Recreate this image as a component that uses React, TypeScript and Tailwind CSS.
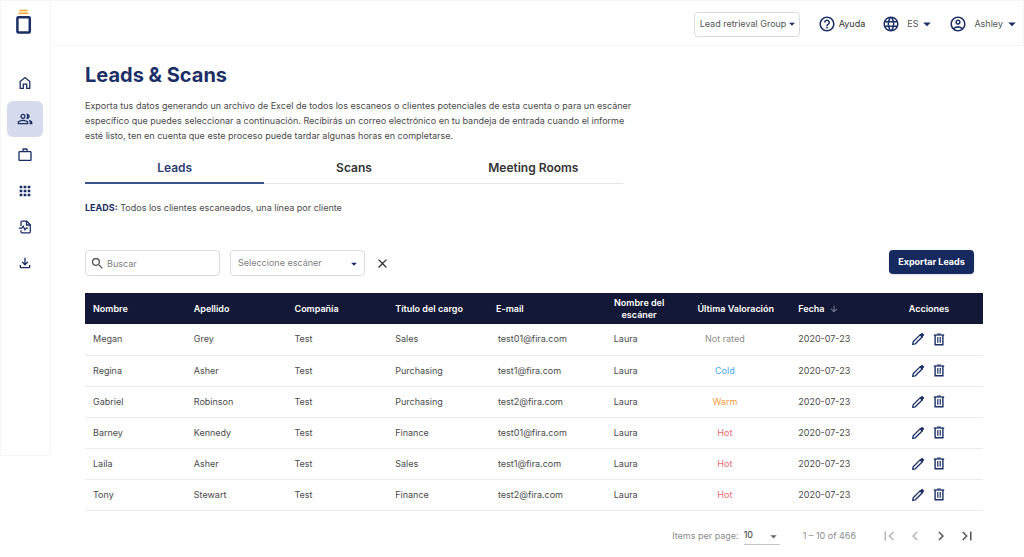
import { useState } from 'react'
import type { ReactNode } from 'react'
import clsx from 'clsx'
import {
  MdApps,
  MdArrowDownward,
  MdArrowDropDown,
  MdChevronLeft,
  MdChevronRight,
  MdClose,
  MdFirstPage,
  MdHelpOutline,
  MdLanguage,
  MdLastPage,
  MdOutlineAccountCircle,
  MdOutlineFileDownload,
  MdOutlinePeopleAlt,
  MdSearch,
  MdWorkOutline,
} from 'react-icons/md'

type Rating = 'Not rated' | 'Cold' | 'Warm' | 'Hot'

interface Lead {
  name: string
  surname: string
  company: string
  role: string
  email: string
  scanner: string
  rating: Rating
  date: string
}

const leads: Lead[] = [
  { name: 'Megan', surname: 'Grey', company: 'Test', role: 'Sales', email: 'test01@fira.com', scanner: 'Laura', rating: 'Not rated', date: '2020-07-23' },
  { name: 'Regina', surname: 'Asher', company: 'Test', role: 'Purchasing', email: 'test1@fira.com', scanner: 'Laura', rating: 'Cold', date: '2020-07-23' },
  { name: 'Gabriel', surname: 'Robinson', company: 'Test', role: 'Purchasing', email: 'test2@fira.com', scanner: 'Laura', rating: 'Warm', date: '2020-07-23' },
  { name: 'Barney', surname: 'Kennedy', company: 'Test', role: 'Finance', email: 'test01@fira.com', scanner: 'Laura', rating: 'Hot', date: '2020-07-23' },
  { name: 'Laila', surname: 'Asher', company: 'Test', role: 'Sales', email: 'test1@fira.com', scanner: 'Laura', rating: 'Hot', date: '2020-07-23' },
  { name: 'Tony', surname: 'Stewart', company: 'Test', role: 'Finance', email: 'test2@fira.com', scanner: 'Laura', rating: 'Hot', date: '2020-07-23' },
]

const ratingColor: Record<Rating, string> = {
  'Not rated': 'text-[#8c8c8c]',
  Cold: 'text-[#3fa9f5]',
  Warm: 'text-[#fb9a3c]',
  Hot: 'text-[#ec6a70]',
}

const tabs = ['Leads', 'Scans', 'Meeting Rooms']

function Logo() {
  return (
    <svg width="16" height="26" viewBox="0 0 16 26" fill="none" aria-hidden="true">
      <path d="M3.5 1.5h8" stroke="#f5ae45" strokeWidth="1.8" />
      <path d="M2.5 4.3h10" stroke="#f5ae45" strokeWidth="1.8" />
      <rect x="1.4" y="8.2" width="12.4" height="15.4" rx="1" stroke="#1b2f66" strokeWidth="2.5" />
    </svg>
  )
}

function HomeIcon() {
  return (
    <svg width="14" height="14" viewBox="0 0 14 14" fill="none" stroke="currentColor" strokeWidth="1.3" aria-hidden="true">
      <path d="M2.2 5.5L7 1.6L11.8 5.5V12.4H8.7V8.2H5.3V12.4H2.2Z" />
    </svg>
  )
}

function FilePulseIcon() {
  return (
    <svg width="14" height="14" viewBox="0 0 14 14" fill="none" stroke="currentColor" strokeWidth="1.3" aria-hidden="true">
      <path d="M3 6V2.2Q3 1.2 4 1.2H8.8L12.3 4.7V11.8Q12.3 12.8 11.3 12.8H4Q3 12.8 3 11.8V10.3" />
      <path d="M8.5 1.2V5H12.3" />
      <path d="M.8 8.2H3.8L5.2 6.2L7 9.8L8.2 8.2H10" />
    </svg>
  )
}

function PencilIcon() {
  return (
    <svg width="14" height="14" viewBox="0 0 14 14" fill="none" stroke="currentColor" strokeWidth="1.3" strokeLinejoin="round" aria-hidden="true">
      <path d="M1.7 12.3L2.2 9.7L9.3 2.6L11.4 4.7L4.3 11.8Z" />
      <path d="M8.8 3.1L10.5 1.5Q11.1 1 11.7 1.5L12.5 2.3Q13 2.9 12.5 3.5L10.9 5.2Z" fill="currentColor" strokeWidth=".8" />
    </svg>
  )
}

function TrashIcon() {
  return (
    <svg width="12" height="13" viewBox="0 0 12 13" fill="none" stroke="currentColor" aria-hidden="true">
      <path d="M.8 2H11.2" strokeWidth="1.3" />
      <path d="M4 1H8" strokeWidth="1" />
      <path d="M2.1 2V11.8H9.9V2" strokeWidth="1.4" />
      <path d="M4.8 4V9.8M7.2 4V9.8" strokeWidth="1.2" />
    </svg>
  )
}

const navItems: { label: string; icon: ReactNode }[] = [
  { label: 'Inicio', icon: <HomeIcon /> },
  { label: 'Leads', icon: <MdOutlinePeopleAlt size={16} /> },
  { label: 'Empresa', icon: <MdWorkOutline size={16} /> },
  { label: 'Aplicaciones', icon: <MdApps size={16} /> },
  { label: 'Informes', icon: <FilePulseIcon /> },
  { label: 'Descargas', icon: <MdOutlineFileDownload size={16} /> },
]

function Sidebar() {
  return (
    <aside className="w-[51px] min-h-[456px] pl-[6px] shrink-0 self-start border border-[#f6f6f7] flex flex-col items-start">
      <a href="#" aria-label="Portada" className="mt-2 ml-[9px]">
        <Logo />
      </a>
      <nav className="mt-[30px] flex flex-col">
        {navItems.map((item, i) => (
          <a
            key={item.label}
            href="#"
            aria-label={item.label}
            className={clsx('w-9 h-9 rounded-md flex items-center justify-center text-[#1b2f66]', i === 1 && 'bg-[#d6daed]')}
          >
            {item.icon}
          </a>
        ))}
      </nav>
    </aside>
  )
}

function TopBar() {
  return (
    <header className="h-[46px] pt-[2px] pr-[2px] border-y border-r border-[#f6f6f7] flex items-center justify-end text-[9px] text-[#555]">
      <div className="relative flex">
        <select aria-label="Grupo" className="appearance-none w-[106px] h-[25px] pl-[5px] rounded border border-[#dcdcdf] bg-white">
          <option>Lead retrieval Group</option>
        </select>
        <MdArrowDropDown size={14} className="absolute right-[1px] top-[5px] pointer-events-none text-[#1b2f66]" />
      </div>
      <a href="#" className="ml-[18px] flex items-center gap-[3px] text-[#333]">
        <MdHelpOutline size={18} className="text-[#1b2f66]" />
        Ayuda
      </a>
      <button className="ml-[17px] flex items-center">
        <MdLanguage size={18} className="text-[#1b2f66]" />
        <span className="ml-[7px]">ES</span>
        <MdArrowDropDown size={18} className="text-[#1b2f66]" />
      </button>
      <button className="ml-[13px] flex items-center">
        <MdOutlineAccountCircle size={18} className="text-[#1b2f66]" />
        <span className="ml-[7px]">Ashley</span>
        <MdArrowDropDown size={18} className="text-[#1b2f66]" />
      </button>
    </header>
  )
}

function LeadsTable() {
  return (
    <table className="w-full table-fixed text-left text-[9px] leading-3 text-[#4a4a4a]">
      <thead>
        <tr className="h-[31px] bg-[#131836] text-white">
          <th className="px-2 font-semibold">Nombre</th>
          <th className="px-2 font-semibold">Apellido</th>
          <th className="px-2 font-semibold">Compañía</th>
          <th className="px-2 font-semibold">Título del cargo</th>
          <th className="px-2 font-semibold">E-mail</th>
          <th className="px-5 font-semibold text-center">Nombre del escáner</th>
          <th className="px-2 font-semibold whitespace-nowrap">Última Valoración</th>
          <th className="px-2 font-semibold">
            <span className="flex items-center gap-1">
              Fecha
              <MdArrowDownward size={10} className="text-[#8d90a3]" />
            </span>
          </th>
          <th className="w-[92px] pr-4 font-semibold text-center">Acciones</th>
        </tr>
      </thead>
      <tbody>
        {leads.map(lead => (
          <tr key={lead.name} className="h-[31px] border-b border-[#ebebed]">
            <td className="px-2">{lead.name}</td>
            <td className="px-2">{lead.surname}</td>
            <td className="px-2">{lead.company}</td>
            <td className="px-2">{lead.role}</td>
            <td className="pl-[10px]">{lead.email}</td>
            <td className="pl-[25px]">{lead.scanner}</td>
            <td className={clsx('pr-[30px] text-center', ratingColor[lead.rating])}>{lead.rating}</td>
            <td className="px-2">{lead.date}</td>
            <td className="pr-[18px]">
              <div className="flex items-center justify-center gap-2 text-[#1b2f66]">
                <button aria-label={`Editar ${lead.name}`}>
                  <PencilIcon />
                </button>
                <button aria-label={`Eliminar ${lead.name}`}>
                  <TrashIcon />
                </button>
              </div>
            </td>
          </tr>
        ))}
      </tbody>
    </table>
  )
}

function Pagination() {
  return (
    <div className="mt-4 pr-[7px] flex items-center justify-end text-[9px] text-[#8c8c8c]">
      <label htmlFor="page-size">Items per page:</label>
      <div className="relative ml-[5px] flex">
        <select id="page-size" defaultValue="10" className="appearance-none w-9 h-[18px] border-b border-[#c4c4c4] bg-white text-[#333]">
          <option>10</option>
          <option>25</option>
          <option>50</option>
        </select>
        <MdArrowDropDown size={15} className="absolute -right-[1px] top-[2px] pointer-events-none text-[#666]" />
      </div>
      <span className="ml-[23px]">1 – 10 of 466</span>
      <div className="ml-6 flex gap-2">
        <button aria-label="Primera página" disabled className="text-[#b5b5b5]"><MdFirstPage size={18} /></button>
        <button aria-label="Página anterior" disabled className="text-[#b5b5b5]"><MdChevronLeft size={18} /></button>
        <button aria-label="Página siguiente" className="text-[#555]"><MdChevronRight size={18} /></button>
        <button aria-label="Última página" className="text-[#555]"><MdLastPage size={18} /></button>
      </div>
    </div>
  )
}

export default function App() {
  const [tab, setTab] = useState('Leads')

  return (
    <div className="min-h-screen bg-white flex font-['Inter',sans-serif]">
      <Sidebar />
      <div className="flex-1 min-w-0">
        <TopBar />
        <main className="pl-[34px] pr-[41px] pt-[17px]">
          <h1 className="text-[20px] leading-6 font-bold text-[#1b2f66]">Leads &amp; Scans</h1>
          <p className="mt-[11px] max-w-[550px] text-[9px] leading-[15px] text-[#4a4a4a]">
            Exporta tus datos generando un archivo de Excel de todos los escaneos o clientes potenciales de esta cuenta o para un escáner
            específico que puedes seleccionar a continuación. Recibirás un correo electrónico en tu bandeja de entrada cuando el informe
            esté listo, ten en cuenta que este proceso puede tardar algunas horas en completarse.
          </p>

          {/* Tabs */}
          <div role="tablist" className="mt-[10px] max-w-[538px] grid grid-cols-3 border-b border-[#e4e4e6]">
            {tabs.map(t => (
              <button
                key={t}
                role="tab"
                aria-selected={t === tab}
                onClick={() => setTab(t)}
                className={clsx(
                  'h-[31px] -mb-px border-b-2 text-[12px] font-semibold',
                  t === tab ? 'border-[#3f5489] text-[#2b3d72]' : 'border-transparent text-[#333]'
                )}
              >
                {t}
              </button>
            ))}
          </div>

          <p className="mt-4 text-[9px] leading-[15px] text-[#4a4a4a]">
            <strong className="font-bold text-[#1b2f66]">LEADS:</strong> Todos los clientes escaneados, una línea por cliente
          </p>

          {/* Filters */}
          <div className="mt-[35px] flex items-start">
            <div className="relative flex">
              <input
                type="search"
                aria-label="Buscar"
                placeholder="Buscar"
                className="w-[135px] h-[26px] pl-[21px] rounded border border-[#dcdcdf] text-[9px] placeholder:text-[#808080]"
              />
              <MdSearch size={15} className="absolute left-[5px] top-[6px] text-[#555]" />
            </div>
            <div className="relative ml-[10px] flex">
              <select aria-label="Seleccione escáner" className="appearance-none w-[135px] h-[26px] pl-[7px] rounded border border-[#dcdcdf] bg-white text-[9px] text-[#808080]">
                <option>Seleccione escáner</option>
                <option>Laura</option>
              </select>
              <MdArrowDropDown size={14} className="absolute right-1 top-[7px] pointer-events-none text-[#1b2f66]" />
            </div>
            <button aria-label="Borrar filtros" className="ml-[10px] h-[26px] text-[#333]">
              <MdClose size={15} />
            </button>
            <button className="ml-auto mr-[9px] h-6 w-[85px] rounded bg-[#172a5f] text-[9px] font-bold text-white shadow">
              Exportar Leads
            </button>
          </div>

          <div className="mt-[17px]">
            <LeadsTable />
          </div>
          <Pagination />
        </main>
      </div>
    </div>
  )
}
